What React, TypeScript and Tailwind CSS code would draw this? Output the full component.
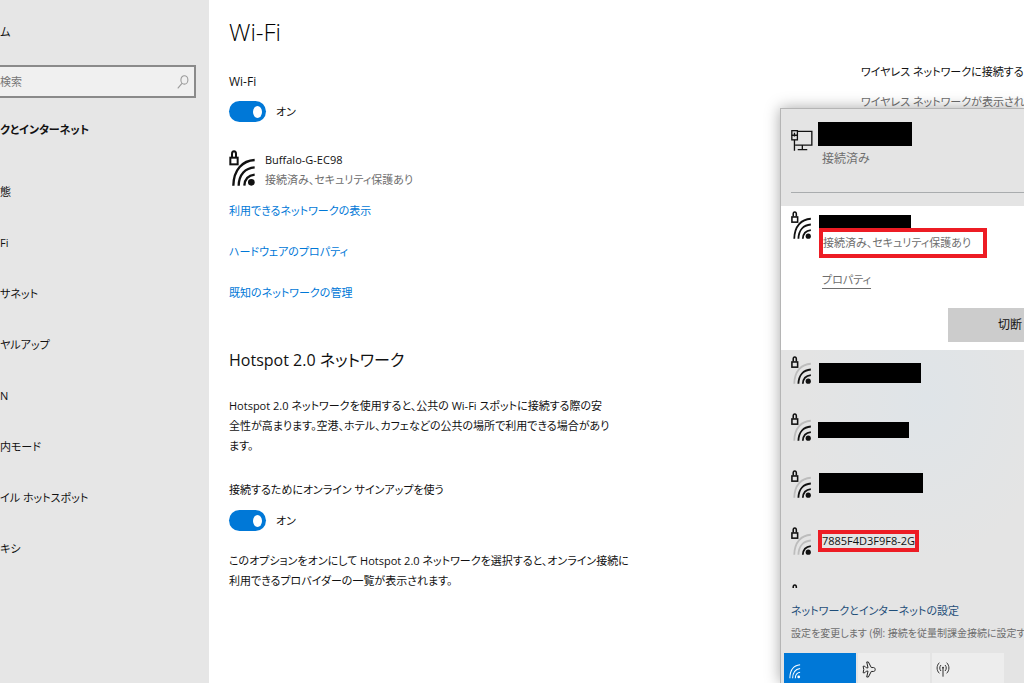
import { useState } from "react";

const navItems = ["態", "Fi", "サネット", "ヤルアップ", "N", "内モード", "イル ホットスポット", "キシ"];

// strength: number of dark arcs (0-3), the rest is drawn faint
function SecuredWifiIcon({ strength = 3, className }: { strength?: number; className: string }) {
  const arcs = ["M76 74C58 76 46 88 45 107", "M76 52C48 54 29 73 28 107", "M76 30C40 32 13 58 12 107"];
  return (
    <svg viewBox="0 0 76 108" className={className} fill="none" stroke="#111" aria-hidden="true">
      <rect x="3" y="23" width="22" height="20" strokeWidth="6" />
      <path d="M8 21V12C8 1 20 1 20 12V21" strokeWidth="6" />
      {arcs.map((d, i) => (
        <path key={d} d={d} strokeWidth="7" stroke={i < strength ? "#111" : "#bdbdbd"} />
      ))}
      <circle cx="66" cy="97" r="10" fill="#111" stroke="none" />
    </svg>
  );
}

function EthernetIcon() {
  return (
    <svg viewBox="0 0 66 64" className="h-[21px] w-[22px]" fill="none" stroke="#111" strokeWidth="4" aria-hidden="true">
      <path d="M19 4H63V46H12" />
      <path d="M34 46V60M20 60H49" />
      <rect x="2" y="2" width="17" height="28" />
      <path d="M2 16H19M10 8V20M10 30V63" />
    </svg>
  );
}

function WifiTileIcon() {
  return (
    <svg viewBox="0 0 34 44" className="h-[15px] w-[12px]" fill="none" stroke="#fff" strokeWidth="3" aria-hidden="true">
      <path d="M32 2C14 4 2 18 2 42M32 13C19 15 10 25 10 42M32 24C24 25 18 32 18 42" />
      <circle cx="28" cy="38" r="4" fill="#fff" stroke="none" />
    </svg>
  );
}

function PlaneIcon() {
  return (
    <svg viewBox="0 0 42 52" className="h-[17px] w-[14px]" fill="none" stroke="#222" strokeWidth="3" strokeLinejoin="round" aria-hidden="true">
      <path d="M3 16H8L13 21H18L14 3H19L28 20H35C38 20 40 23 40 26C40 29 38 32 35 32H28L19 49H14L18 31H13L8 36H3L5 26Z" />
    </svg>
  );
}

function HotspotIcon() {
  return (
    <svg viewBox="0 0 40 48" className="h-[16px] w-[14px]" fill="none" stroke="#333" strokeWidth="3" aria-hidden="true">
      <path d="M9 5C0 14 0 28 9 37M31 5C40 14 40 28 31 37M14 12C9 17 9 25 14 30M26 12C31 17 31 25 26 30M20 22V47" />
      <circle cx="20" cy="20" r="3" fill="#333" stroke="none" />
    </svg>
  );
}

function Toggle({ id, label }: { id: string; label: string }) {
  const [on, setOn] = useState(true);
  return (
    <div className="flex h-[21px] items-center gap-[10px]">
      <input
        id={id}
        type="checkbox"
        role="switch"
        aria-label={label}
        checked={on}
        onChange={(e) => setOn(e.target.checked)}
        className="flex h-[21px] w-[37px] shrink-0 appearance-none items-center rounded-full bg-[#999] px-1 before:block before:h-3 before:w-[9px] before:rounded-[50%] before:bg-white checked:justify-end checked:bg-[#0078d7]"
      />
      <label htmlFor={id}>{on ? "オン" : "オフ"}</label>
    </div>
  );
}

function Sidebar() {
  return (
    <aside className="w-[209px] shrink-0 bg-[#e6e6e6] pr-[13px] whitespace-nowrap">
      <a href="#home" className="mt-[22px] block">ム</a>
      <div className="mt-[23px] flex h-[33px] items-center border-2 border-l-0 border-[#8a8a8a] bg-[#f0f0f0] pr-[5px]">
        <input
          type="search"
          aria-label="検索"
          placeholder="検索"
          className="min-w-0 flex-1 bg-transparent outline-none placeholder:text-[#767676]"
        />
        <svg viewBox="0 0 34 40" className="h-[14px] w-[12px]" fill="none" stroke="#999" strokeWidth="3" aria-hidden="true">
          <ellipse cx="21" cy="14" rx="10" ry="12" />
          <path d="M14 24L2 38" />
        </svg>
      </div>
      <h2 className="mt-[22px] font-bold">クとインターネット</h2>
      <nav className="mt-[26px]">
        {navItems.map((item) => (
          <a key={item} href="#nav" className="flex h-[51px] items-center">{item}</a>
        ))}
      </nav>
    </aside>
  );
}

function NetworkFlyout() {
  return (
    <section className="absolute top-[108px] right-0 bottom-0 flex w-[244px] flex-col overflow-hidden border-t border-l border-[#b5b5b5] bg-[#e4e4e4] whitespace-nowrap">
      <div className="mb-[13px] ml-[10px] flex h-[84px] shrink-0 items-start gap-[5px] border-b border-[#a9acae] pt-[13px]">
        <div className="pt-2"><EthernetIcon /></div>
        <div>
          <div className="h-6 w-[94px] bg-black" />
          <p className="pl-1 text-[12px] leading-[26px] text-[#6e6e6e]">接続済み</p>
        </div>
      </div>

      <div className="flex h-[144px] shrink-0 flex-col bg-white">
        <div className="flex gap-2 pt-[5px] pl-[10px]">
          <SecuredWifiIcon className="h-7 w-5 shrink-0" />
          <div className="pt-1">
            <div className="h-[13px] w-[92px] bg-black" />
            <div className="relative h-[30px] w-[168px]">
              <p className="pl-1 leading-[30px] text-[#6e6e6e]">接続済み、セキュリティ保護あり</p>
              <div className="absolute inset-0 border-4 border-[#ed1c24]" />
            </div>
            <a href="#properties" className="mt-3 ml-[3px] inline-block text-[#6e6e6e] underline underline-offset-4">プロパティ</a>
          </div>
        </div>
        <button className="mt-auto mb-2 ml-[167px] h-[34px] w-[124px] bg-[#ccc] text-[12px]">切断</button>
      </div>

      <ul className="h-[238px] shrink-0 overflow-hidden bg-radial-[at_60%_20%] from-[#dfe4e8] to-[#e4e4e4] to-60%">
        <li className="flex h-[57px] items-start gap-2 pt-[6px] pl-[10px]">
          <SecuredWifiIcon strength={2} className="h-7 w-5" />
          <div className="mt-[7px] h-5 w-[102px] bg-black" />
        </li>
        <li className="flex h-[57px] items-start gap-[7px] pt-[6px] pl-[10px]">
          <SecuredWifiIcon strength={2} className="h-7 w-5" />
          <div className="mt-[9px] h-4 w-[91px] bg-black" />
        </li>
        <li className="flex h-[57px] items-start gap-2 pt-[6px] pl-[10px]">
          <SecuredWifiIcon strength={2} className="h-7 w-5" />
          <div className="mt-[3px] h-5 w-[104px] bg-black" />
        </li>
        <li className="flex h-[57px] items-start gap-[7px] pt-[6px] pl-[10px]">
          <SecuredWifiIcon strength={1} className="h-7 w-5" />
          <div className="relative mt-[3px] flex h-[22px] w-[101px] items-center justify-center">
            <span className="leading-5">7885F4D3F9F8-2G</span>
            <div className="absolute inset-0 border-4 border-[#ed1c24]" />
          </div>
        </li>
        <li className="pt-[6px] pl-[10px]">
          <SecuredWifiIcon strength={1} className="h-7 w-5" />
        </li>
      </ul>

      <div className="shrink-0 pt-[13px] pl-[10px]">
        <a href="#network" className="block text-[#1f4e79]">ネットワークとインターネットの設定</a>
        <p className="mt-[2px] text-[10px] leading-5 text-[#6e6e6e]">設定を変更します (例: 接続を従量制課金接続に設定する)</p>
      </div>
      <div className="mt-[10px] ml-[3px] flex shrink-0 gap-[2px]">
        <button aria-label="Wi-Fi" className="flex h-[72px] w-[72px] shrink-0 items-start bg-[#0078d7] pt-[11px] pl-[5px]"><WifiTileIcon /></button>
        <button aria-label="機内モード" className="flex h-[72px] w-[72px] shrink-0 items-start bg-[#ededed] pt-2 pl-1"><PlaneIcon /></button>
        <button aria-label="モバイル ホットスポット" className="flex h-[72px] w-[72px] shrink-0 items-start bg-[#ededed] pt-2 pl-1"><HotspotIcon /></button>
      </div>
    </section>
  );
}

export default function App() {
  return (
    <div className="relative flex h-screen overflow-hidden bg-white font-['Open_Sans','Noto_Sans_CJK_JP',sans-serif] text-[11px] leading-5 text-[#111] [font-feature-settings:'palt']">
      <Sidebar />

      <main className="flex-1 pt-4 pl-5 whitespace-nowrap">
        <h1 className="text-2xl leading-8 font-light text-black">Wi-Fi</h1>
        <p className="mt-6 mb-[9px] text-[12px]">Wi-Fi</p>
        <Toggle id="wifi" label="Wi-Fi" />

        <div className="mt-7 flex gap-[10px]">
          <SecuredWifiIcon className="h-9 w-[26px]" />
          <div>
            <p>Buffalo-G-EC98</p>
            <p className="text-[#6e6e6e]">接続済み、セキュリティ保護あり</p>
          </div>
        </div>

        <div className="mt-[11px] flex flex-col items-start gap-[21px] text-[#0078d7]">
          <a href="#available">利用できるネットワークの表示</a>
          <a href="#hardware">ハードウェアのプロパティ</a>
          <a href="#known">既知のネットワークの管理</a>
        </div>

        <h2 className="mt-[41px] text-base leading-8">Hotspot 2.0 ネットワーク</h2>
        <p className="mt-5">
          Hotspot 2.0 ネットワークを使用すると、公共の Wi-Fi スポットに接続する際の安<br />
          全性が高まります。空港、ホテル、カフェなどの公共の場所で利用できる場合があり<br />
          ます。
        </p>
        <p className="mt-6 mb-[10px]">接続するためにオンライン サインアップを使う</p>
        <Toggle id="hotspot" label="接続するためにオンライン サインアップを使う" />
        <p className="mt-5">
          このオプションをオンにして Hotspot 2.0 ネットワークを選択すると、オンライン接続に<br />
          利用できるプロバイダーの一覧が表示されます。
        </p>
      </main>

      <aside className="w-[163px] shrink-0 pt-[62px] whitespace-nowrap">
        <h2>ワイヤレス ネットワークに接続する</h2>
        <a href="#help" className="mt-[10px] block text-[#6e6e6e]">ワイヤレス ネットワークが表示されない</a>
      </aside>

      {/* soft shadow around the flyout */}
      <div className="absolute top-[108px] right-0 bottom-0 w-[244px] shadow-[0_0_14px_rgba(0,0,0,0.35)]" />
      <NetworkFlyout />
    </div>
  );
}
